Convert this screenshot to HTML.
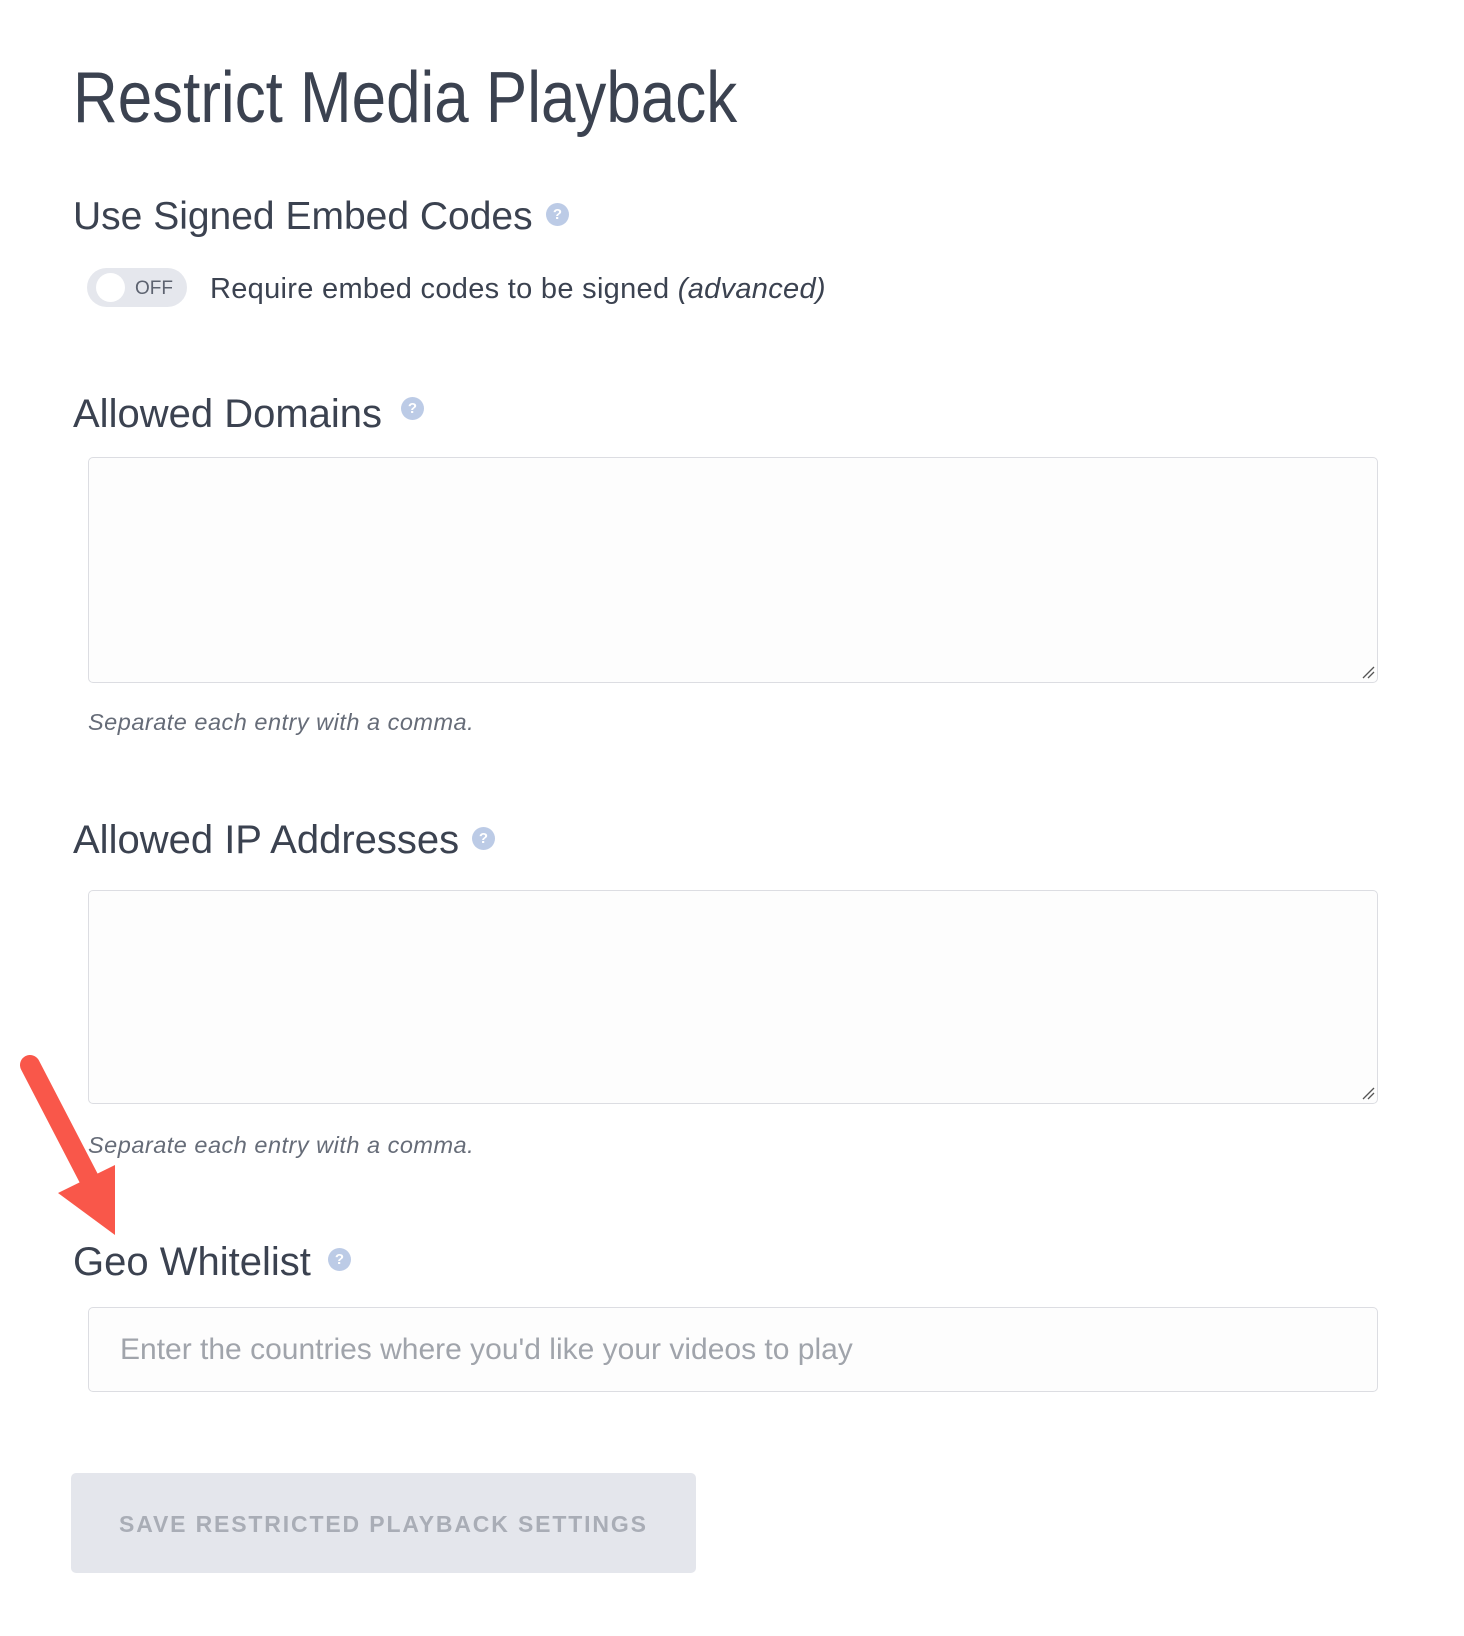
<!DOCTYPE html>
<html><head><meta charset="utf-8"><style>
html,body{margin:0;padding:0;background:#fff;width:1464px;height:1636px;overflow:hidden;position:relative;font-family:"Liberation Sans",sans-serif;color:#3b4250}
.a{position:absolute;white-space:nowrap;line-height:1}
.h2{font-size:40px}
.q{position:absolute;width:23px;height:23px;border-radius:50%;background:#bccbe6;color:#fff;font-size:15px;font-weight:bold;text-align:center;line-height:23px}
.ta{position:absolute;left:88px;width:1290px;border:1.5px solid #dcdde2;border-radius:5px;background:#fdfdfd;box-sizing:border-box}
.help{font-size:23.5px;font-style:italic;color:#666c78;letter-spacing:0.5px}
</style></head><body>
<div class="a" style="left:73px;top:62px;font-size:72px;transform:scaleX(.86);transform-origin:0 0">Restrict Media Playback</div>

<div class="a" style="left:73px;top:197px;font-size:39px">Use Signed Embed Codes</div>
<div class="q" style="left:546px;top:203px">?</div>
<div style="position:absolute;left:87px;top:268px;width:100px;height:39px;border-radius:20px;background:#e5e7ed"></div>
<div style="position:absolute;left:96px;top:273px;width:29px;height:29px;border-radius:50%;background:#fff"></div>
<div class="a" style="left:135px;top:279px;font-size:19px;color:#5d6370">OFF</div>
<div class="a" style="left:210px;top:275px;font-size:29px;letter-spacing:0.3px">Require embed codes to be signed <i>(advanced)</i></div>

<div class="a h2" style="left:73px;top:394px">Allowed Domains</div>
<div class="q" style="left:401px;top:397px">?</div>
<div class="ta" style="top:457px;height:226px"></div>
<svg style="position:absolute;left:1361px;top:665px" width="14" height="14"><path d="M2 13L13 2M7 13L13 7" stroke="#555" stroke-width="1.3"/></svg>
<div class="a help" style="left:88px;top:711px">Separate each entry with a comma.</div>

<div class="a h2" style="left:73px;top:820px">Allowed IP Addresses</div>
<div class="q" style="left:472px;top:827px">?</div>
<div class="ta" style="top:890px;height:214px"></div>
<svg style="position:absolute;left:1361px;top:1086px" width="14" height="14"><path d="M2 13L13 2M7 13L13 7" stroke="#555" stroke-width="1.3"/></svg>
<div class="a help" style="left:88px;top:1134px">Separate each entry with a comma.</div>

<div class="a h2" style="left:73px;top:1242px">Geo Whitelist</div>
<div class="q" style="left:328px;top:1248px">?</div>
<div class="ta" style="top:1307px;height:85px"></div>
<div class="a" style="left:120px;top:1335px;font-size:30px;color:#a0a4ab">Enter the countries where you'd like your videos to play</div>

<div style="position:absolute;left:71px;top:1473px;width:625px;height:100px;border-radius:5px;background:#e4e6ec"></div>
<div class="a" style="left:119px;top:1513px;font-size:23px;font-weight:bold;color:#a9adb6;letter-spacing:1.85px">SAVE RESTRICTED PLAYBACK SETTINGS</div>

<svg style="position:absolute;left:0;top:1040px" width="140" height="210">
<path d="M30 25L100 160" stroke="#f9574a" stroke-width="20" stroke-linecap="round"/>
<polygon points="58,153 115,125 115,195" fill="#f9574a"/>
</svg>
</body></html>
